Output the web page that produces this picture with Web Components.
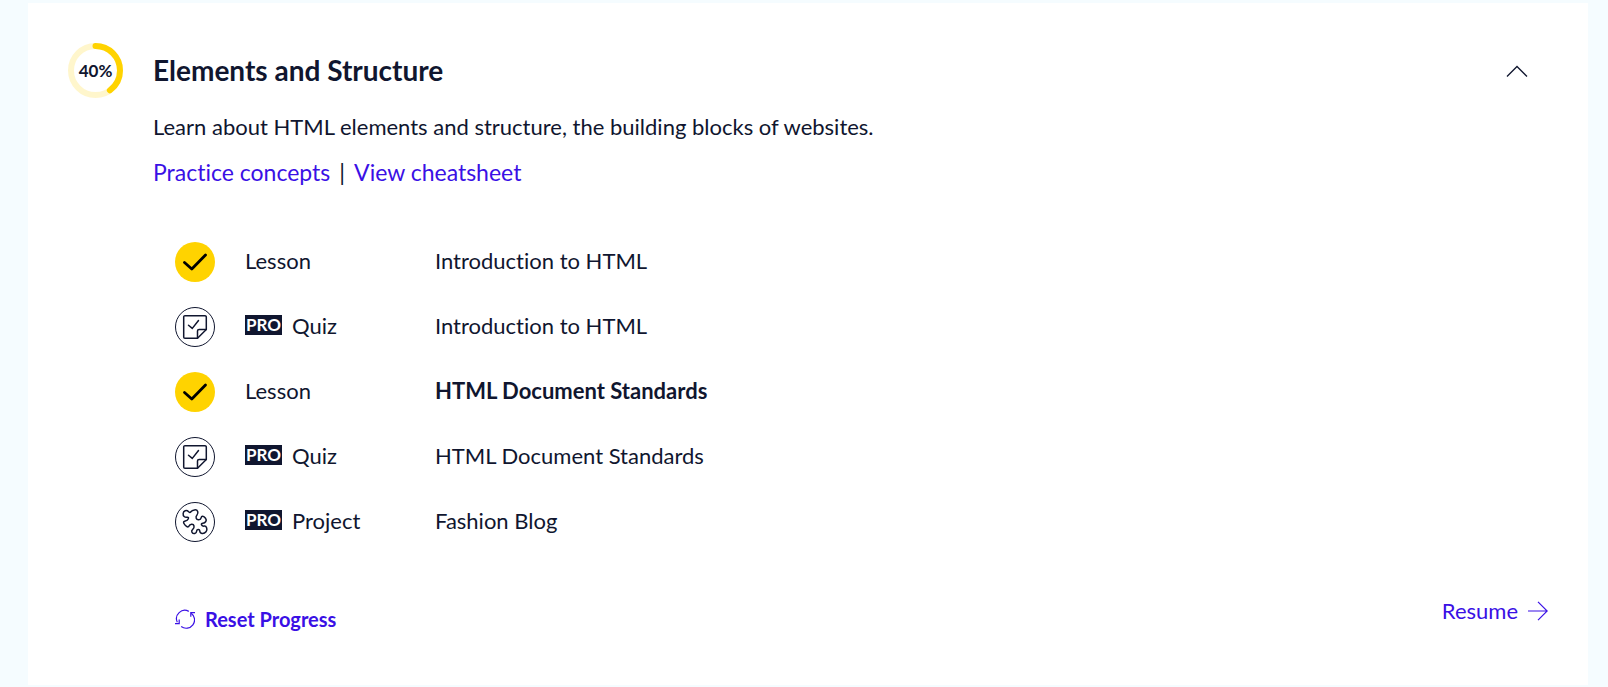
<!DOCTYPE html>
<html lang="en">
<head>
<meta charset="utf-8">
<meta name="viewport" content="width=device-width, initial-scale=1">
<title>Elements and Structure</title>
<style>
  body {
    margin: 0;
    padding: 3px 20px 2px 28px;
    background: #f5fcff;
    color: #10162f;
    font-family: Lato, "Open Sans", sans-serif;
    font-size: 22px;
    line-height: 32px;
    font-variant-ligatures: none;
    --accent: #3a10e5;
    --yellow: #ffd300;
    --navy: #10162f;
  }
</style>
</head>
<body>
<course-module percent="40">
  <span slot="title">Elements and Structure</span>
  <span slot="description">Learn about HTML elements and structure, the building blocks of websites.</span>
  <content-item status="done" type="Lesson">Introduction to HTML</content-item>
  <content-item status="quiz" type="Quiz" pro>Introduction to HTML</content-item>
  <content-item status="done" type="Lesson" current>HTML Document Standards</content-item>
  <content-item status="quiz" type="Quiz" pro>HTML Document Standards</content-item>
  <content-item status="project" type="Project" pro>Fashion Blog</content-item>
</course-module>

<script>
class ProgressRing extends HTMLElement {
  connectedCallback() {
    const value = Number(this.getAttribute('value')) || 0;
    this.attachShadow({ mode: 'open' }).innerHTML = `
      <style>
        :host { display: grid; place-items: center; width: 55px; height: 55px; flex: none; }
        svg, span { grid-area: 1 / 1; }
        span { font-size: 17px; font-weight: 700; line-height: 20px; }
        circle { fill: none; stroke: var(--yellow); stroke-width: 6; }
        .track { opacity: .2; }
        .bar { stroke-linecap: round; }
      </style>
      <svg width="55" height="55" viewBox="0 0 55 55" aria-hidden="true">
        <circle class="track" cx="27.5" cy="27.5" r="24.5"/>
        <circle class="bar" cx="27.5" cy="27.5" r="24.5" pathLength="100"
          stroke-dasharray="${value} 100" transform="rotate(-90 27.5 27.5)"/>
      </svg>
      <span>${value}%</span>`;
  }
}
customElements.define('progress-ring', ProgressRing);

// Closed curve through the midpoints of a ring of control points.
function smoothPath(points) {
  const mid = (a, b) => `${(a[0] + b[0]) / 2} ${(a[1] + b[1]) / 2}`;
  const last = points[points.length - 1];
  return `M${mid(last, points[0])}` + points.map((p, i) =>
    `Q${p[0]} ${p[1]} ${mid(p, points[(i + 1) % points.length])}`).join('') + 'Z';
}

const PUZZLE = smoothPath([
  [8, 13.5], [8.3, 9.5], [12, 8], [14.8, 11.2], [17, 8.2], [22, 7.6], [23.4, 11.5], [20.6, 14.5],
  [21.8, 18], [25.8, 17.6], [26.4, 14.2], [29.2, 14.5], [31.8, 18], [29.8, 21], [26, 21.3],
  [27, 24.4], [31, 23.8], [32.4, 28], [29.6, 31.6], [25, 31.4], [24.6, 27.2], [21.6, 27.6],
  [21.6, 31], [18, 31.8], [16, 28.8], [19.4, 26], [18.6, 22], [14.6, 22.4], [13.4, 25.6],
  [9.6, 23], [8, 19.4], [12.6, 18.6], [14, 15], [10.2, 15.4]
]);

const STATUS_ICONS = {
  done: `<circle cx="20" cy="20" r="20" fill="#ffd300" stroke="none"/>
    <path d="M9.5 20.5 16.8 27 30.5 13" fill="none" stroke="#000" stroke-width="2.8" stroke-linecap="round" stroke-linejoin="round"/>`,
  quiz: `<circle cx="20" cy="20" r="19.5"/>
    <g stroke-width="1.5" stroke-linecap="round" stroke-linejoin="round">
      <path d="M22.5 31.2H10a1.3 1.3 0 0 1-1.3-1.3V10A1.3 1.3 0 0 1 10 8.7h20a1.3 1.3 0 0 1 1.3 1.3v12.5z"/>
      <path d="M31.3 22.5h-7.2a1.6 1.6 0 0 0-1.6 1.6v7.1"/>
      <path d="m13.5 18.2 3.8 3.2 6.2-7.9"/>
    </g>`,
  project: `<circle cx="20" cy="20" r="19.5"/><path stroke-width="1.5" d="${PUZZLE}"/>`
};

class ContentItem extends HTMLElement {
  connectedCallback() {
    this.setAttribute('role', 'listitem');
    const pro = this.hasAttribute('pro') ? '<b class="pro">PRO</b>' : '';
    this.attachShadow({ mode: 'open' }).innerHTML = `
      <style>
        :host { display: block; }
        :host([current]) .name { font-weight: 700; }
        a { display: grid; grid-template-columns: 40px 160px 1fr; column-gap: 30px;
            align-items: center; color: inherit; text-decoration: none; }
        svg { display: block; fill: none; stroke: var(--navy); }
        .kind, .name { padding-bottom: 2px; }
        .kind { display: flex; align-items: center; gap: 10px; }
        .pro { width: 37px; background: var(--navy); color: #fff; text-align: center;
               font-size: 17px; line-height: 20px; margin-bottom: 2px; }
      </style>
      <a href="#">
        <svg width="40" height="40" viewBox="0 0 40 40" aria-hidden="true">${STATUS_ICONS[this.getAttribute('status')]}</svg>
        <span class="kind">${pro}<span>${this.getAttribute('type')}</span></span>
        <span class="name"><slot></slot></span>
      </a>`;
  }
}
customElements.define('content-item', ContentItem);

class CourseModule extends HTMLElement {
  connectedCallback() {
    this.attachShadow({ mode: 'open' }).innerHTML = `
      <style>
        :host { display: block; background: #fff; padding: 40px; box-sizing: border-box; }
        header { display: flex; align-items: center; gap: 30px; padding-right: 20px; }
        h2 { flex: 1; margin: 0; font-size: 28px; line-height: 32px; padding-bottom: 2px; }
        a { color: var(--accent); text-decoration: none; }
        button { border: 0; padding: 0; background: none; font: inherit; color: inherit; cursor: pointer; }
        svg { display: block; fill: none; stroke: currentColor; }
        .body { padding-left: 85px; }
        p { margin: 0; }
        .description { padding-top: 13px; }
        .links { display: flex; gap: 9px; padding-top: 13px; font-size: 23px; }
        .list { display: grid; gap: 25px; padding: 54px 0 0 22px; }
        footer { display: flex; justify-content: space-between; align-items: flex-start;
                 padding: 53px 0 12px 22px; }
        .reset { display: flex; align-items: center; gap: 10px; margin-top: 10px;
                 color: var(--accent); font-size: 20px; font-weight: 700; line-height: 28px; }
        .resume { display: flex; align-items: center; gap: 10px; }
      </style>
      <header>
        <progress-ring value="${this.getAttribute('percent')}"></progress-ring>
        <h2><slot name="title"></slot></h2>
        <button type="button" aria-label="Collapse" aria-expanded="true">
          <svg width="22" height="22" viewBox="0 0 22 22"><path d="M1 16.5 11 6.5l10 10" stroke-width="1.3"/></svg>
        </button>
      </header>
      <div class="body">
        <p class="description"><slot name="description"></slot></p>
        <div class="links"><a href="#">Practice concepts</a><span>|</span><a href="#">View cheatsheet</a></div>
        <div class="list" role="list"><slot></slot></div>
        <footer>
          <button class="reset" type="button">
            <svg width="20" height="20" viewBox="0 0 20 20" aria-hidden="true" stroke-width="1.2">
              <path d="M2.3 13.2A8.3 8.3 0 0 1 13.8 2.4M6.2 17.6A8.3 8.3 0 0 0 16.2 4.2"/>
              <path d="M0 14.7h4.2v-4.2M20 3.6h-4.2v4.2"/>
            </svg>
            Reset Progress
          </button>
          <a class="resume" href="#">Resume
            <svg width="20" height="20" viewBox="0 0 20 20" aria-hidden="true" stroke-width="1.2"><path d="M0 10h19M10 .8l9.2 9.2-9.2 9.2"/></svg>
          </a>
        </footer>
      </div>`;
  }
}
customElements.define('course-module', CourseModule);
</script>
</body>
</html>
